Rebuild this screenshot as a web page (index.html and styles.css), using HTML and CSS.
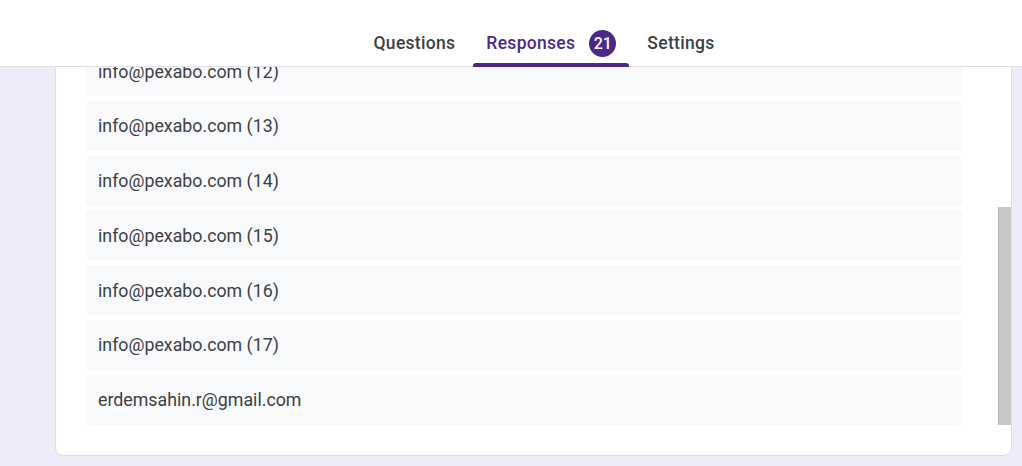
FILE: index.html
```html
<!DOCTYPE html>
<html>
<head>
    <meta content="text/html; charset=utf-8" http-equiv="Content-Type">
    <link rel="stylesheet" href="styles.css">
    <title>Responses</title>
</head>
<body>
    <div class="header">
        <div class="tabs">
            <div class="tab">Questions</div>
            <div class="tab active">Responses <span class="badge">21</span></div>
            <div class="tab">Settings</div>
        </div>
    </div>
    <div class="main">
        <div class="card">
            <div class="list">
                <div class="item">info@pexabo.com (12)</div>
                <div class="item">info@pexabo.com (13)</div>
                <div class="item">info@pexabo.com (14)</div>
                <div class="item">info@pexabo.com (15)</div>
                <div class="item">info@pexabo.com (16)</div>
                <div class="item">info@pexabo.com (17)</div>
                <div class="item">erdemsahin.r@gmail.com</div>
            </div>
            <div class="scrollbar"><div class="thumb"></div></div>
        </div>
    </div>
</body>
</html>
```
FILE: styles.css
```css
body, html {
    margin: 0;
    padding: 0;
    height: 100%;
    overflow: hidden;
    background: #f0ebf8;
    font-family: Roboto, "Liberation Sans", sans-serif;
}

.header {
    height: 66px;
    background: #ffffff;
    border-bottom: 1px solid #e0e0e0;
    display: flex;
    justify-content: center;
    position: relative;
    z-index: 2;
}

.tabs {
    display: flex;
    align-items: stretch;
    gap: 5px;
    margin-left: 66px;
}

.tab {
    display: flex;
    align-items: center;
    padding: 20px 13px 0 13px;
    font-size: 17.5px;
    font-weight: 500;
    color: #3c4043;
    letter-spacing: 0.3px;
    position: relative;
}

.tab.active {
    color: #4b2889;
}

.tab.active:after {
    content: "";
    position: absolute;
    left: 0;
    right: 0;
    bottom: -1px;
    height: 4px;
    background: #4b2889;
    border-radius: 3px 3px 0 0;
}

.badge {
    display: inline-flex;
    align-items: center;
    justify-content: center;
    width: 27px;
    height: 27px;
    margin-left: 14px;
    border-radius: 50%;
    background: #4b2889;
    color: #ffffff;
    font-size: 16px;
    letter-spacing: 0;
}

.main {
    height: 399px;
    overflow: hidden;
    padding: 0 10px 0 55px;
}

.card {
    position: relative;
    margin-top: -22px;
    background: #ffffff;
    border: 1px solid #dadce0;
    border-radius: 0 0 8px 8px;
    padding: 0 49px 30px 30px;
}

.list {
    display: flex;
    flex-direction: column;
    gap: 4.8px;
}

.item {
    height: 50px;
    display: flex;
    align-items: center;
    padding: 0 12px;
    background: #f8f9fa;
    border-radius: 4px;
    font-size: 17.8px;
    color: #3c4043;
}

.scrollbar {
    position: absolute;
    right: 0;
    top: 0;
    bottom: 30px;
    width: 13px;
}

.thumb {
    position: absolute;
    left: 0;
    right: 0;
    bottom: 0;
    height: 218px;
    background: #c8c8c8;
    border-left: 1px solid #b4b4b4;
}
```
